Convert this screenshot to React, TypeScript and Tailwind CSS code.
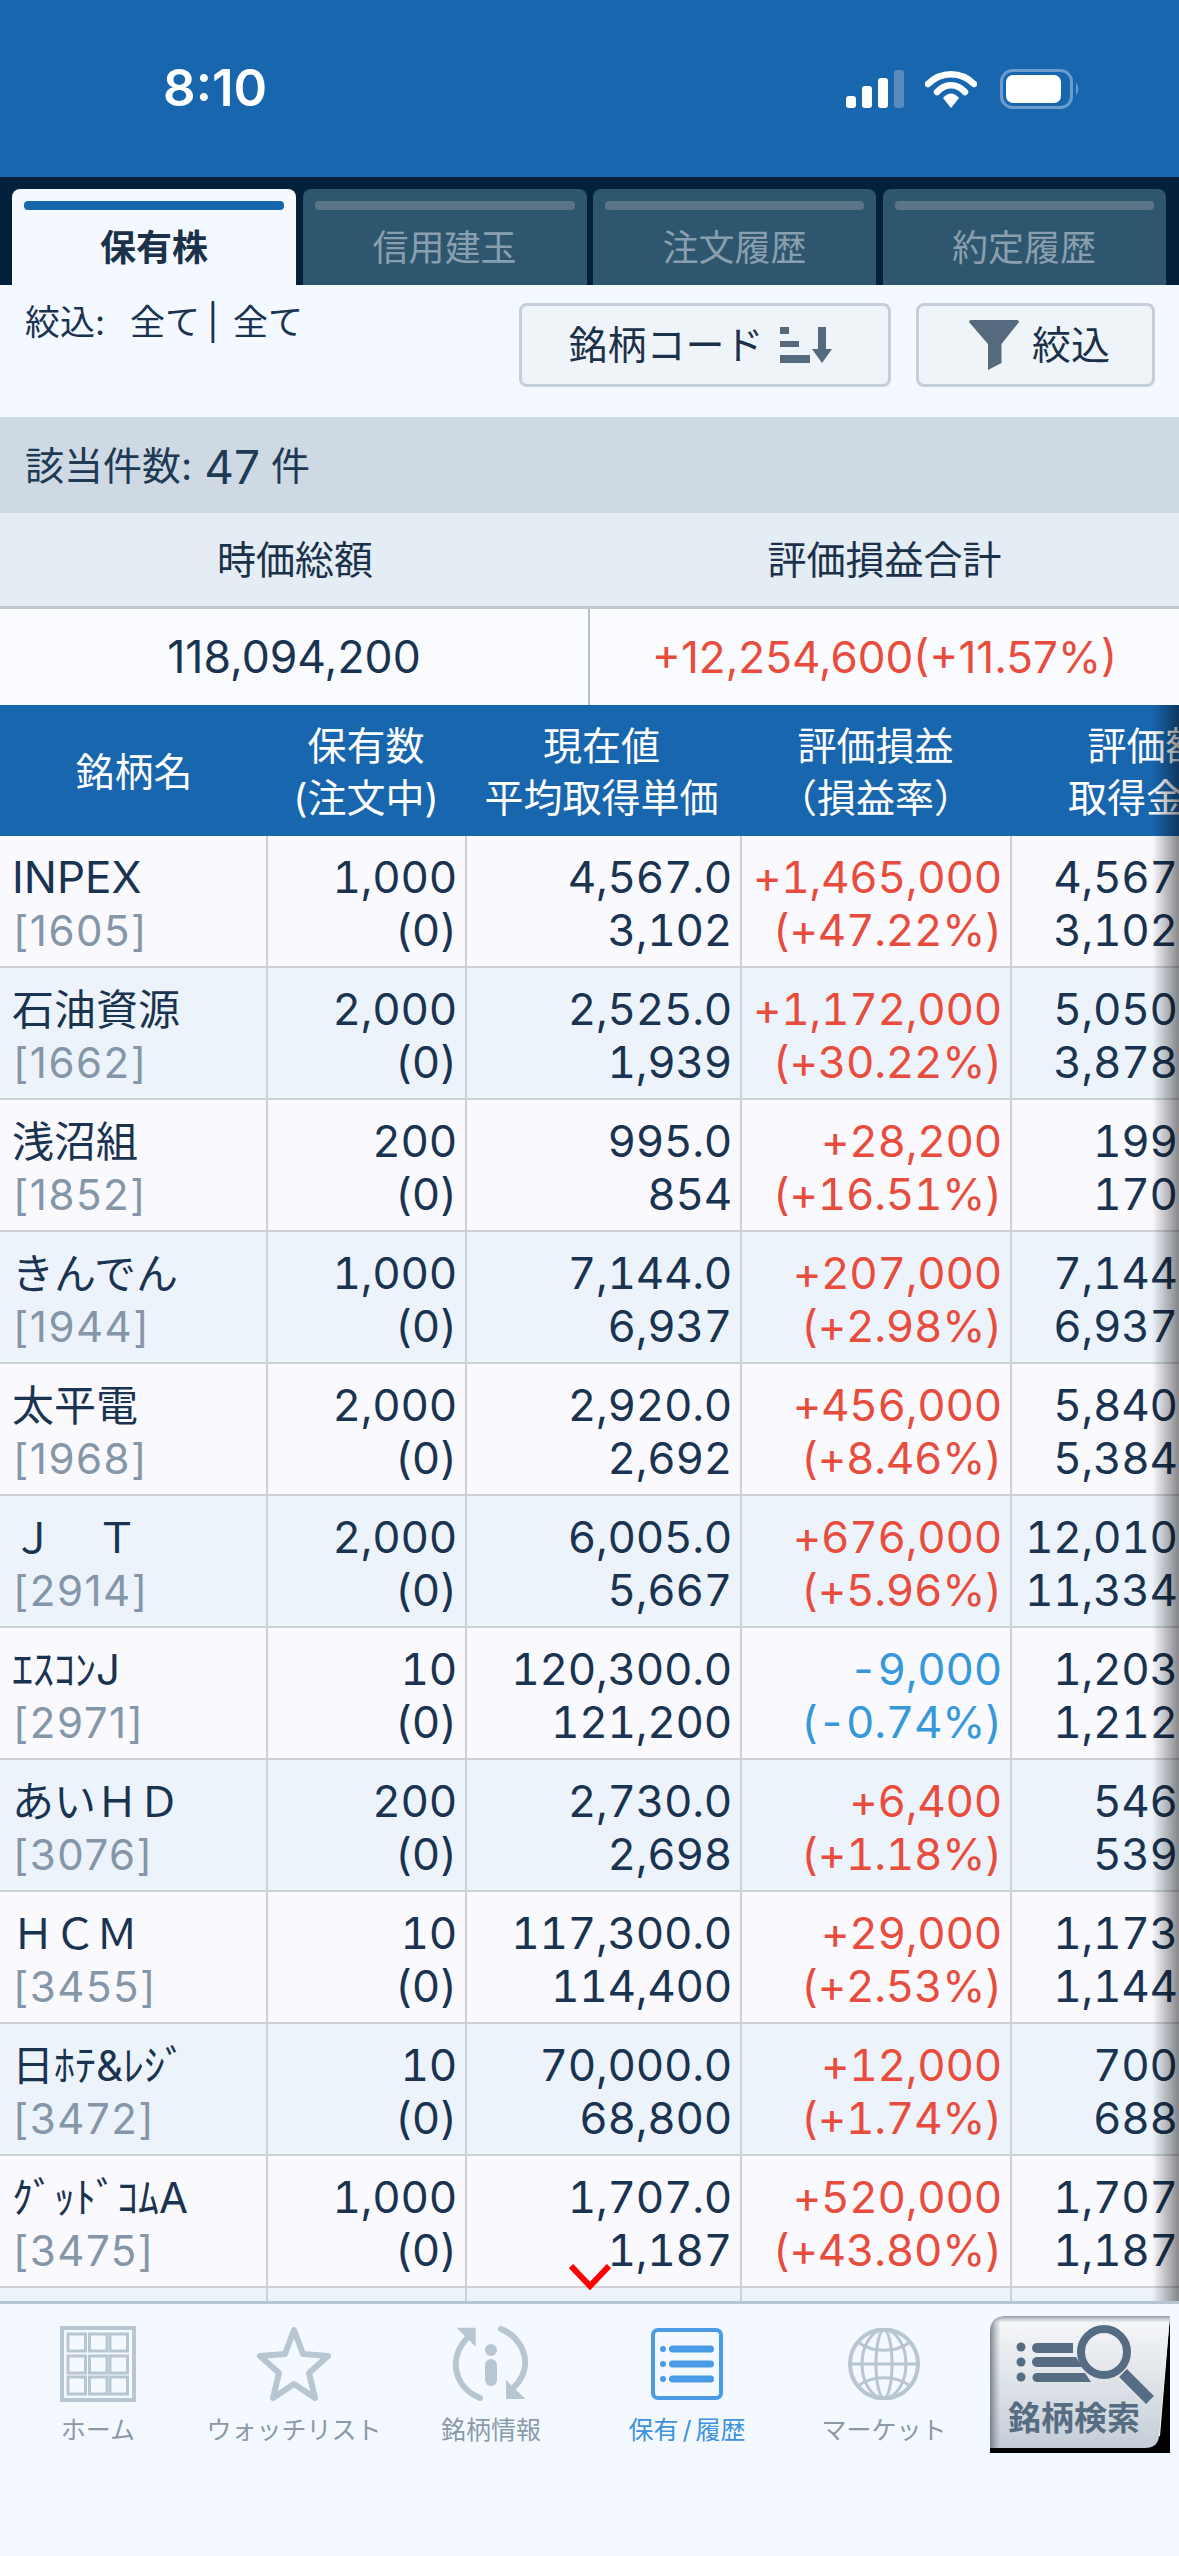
import React from "react";

type Row = { n: string; c: string; q: string; p: string; a: string; g: string; r: string; v: string; t: string; neg?: boolean };

const rows: Row[] = [
  { n: "INPEX", c: "1605", q: "1,000", p: "4,567.0", a: "3,102", g: "+1,465,000", r: "(+47.22%)", v: "4,567,000", t: "3,102,000" },
  { n: "石油資源", c: "1662", q: "2,000", p: "2,525.0", a: "1,939", g: "+1,172,000", r: "(+30.22%)", v: "5,050,000", t: "3,878,000" },
  { n: "浅沼組", c: "1852", q: "200", p: "995.0", a: "854", g: "+28,200", r: "(+16.51%)", v: "199,000", t: "170,800" },
  { n: "きんでん", c: "1944", q: "1,000", p: "7,144.0", a: "6,937", g: "+207,000", r: "(+2.98%)", v: "7,144,000", t: "6,937,000" },
  { n: "太平電", c: "1968", q: "2,000", p: "2,920.0", a: "2,692", g: "+456,000", r: "(+8.46%)", v: "5,840,000", t: "5,384,000" },
  { n: "Ｊ　Ｔ", c: "2914", q: "2,000", p: "6,005.0", a: "5,667", g: "+676,000", r: "(+5.96%)", v: "12,010,000", t: "11,334,000" },
  { n: "ｴｽｺﾝJ", c: "2971", q: "10", p: "120,300.0", a: "121,200", g: "-9,000", r: "(-0.74%)", v: "1,203,000", t: "1,212,000", neg: true },
  { n: "あいＨＤ", c: "3076", q: "200", p: "2,730.0", a: "2,698", g: "+6,400", r: "(+1.18%)", v: "546,000", t: "539,600" },
  { n: "ＨＣＭ", c: "3455", q: "10", p: "117,300.0", a: "114,400", g: "+29,000", r: "(+2.53%)", v: "1,173,000", t: "1,144,000" },
  { n: "日ﾎﾃ&ﾚｼﾞ", c: "3472", q: "10", p: "70,000.0", a: "68,800", g: "+12,000", r: "(+1.74%)", v: "700,000", t: "688,000" },
  { n: "ｸﾞｯﾄﾞｺﾑA", c: "3475", q: "1,000", p: "1,707.0", a: "1,187", g: "+520,000", r: "(+43.80%)", v: "1,707,000", t: "1,187,000" },
];

const cols = "grid grid-cols-[268px_199px_275px_270px_272px] w-[1284px]";

function StatusIcons() {
  return (
    <div className="flex items-center mr-[99px]">
      <svg width="58" height="38" viewBox="0 0 58 38">
        <rect x="0" y="26" width="10" height="12" rx="3" fill="#fff" />
        <rect x="16" y="16" width="10" height="22" rx="3" fill="#fff" />
        <rect x="32" y="8" width="10" height="30" rx="3" fill="#fff" />
        <rect x="48" y="0" width="10" height="38" rx="3" fill="#5a8cc0" />
      </svg>
      <svg width="52" height="38" viewBox="0 0 52 38" fill="none" className="ml-[21px]">
        <path d="M3 14 C16 1 36 1 49 14" stroke="#fff" strokeWidth="6.5" strokeLinecap="round" />
        <path d="M12 22 C20 13 32 13 40 22" stroke="#fff" strokeWidth="6.5" strokeLinecap="round" />
        <path d="M18 28 C23 22 29 22 34 28 L26 38 Z" fill="#fff" />
      </svg>
      <svg width="80" height="40" viewBox="0 0 80 40" fill="none" className="ml-[23px]">
        <rect x="1.5" y="1.5" width="70" height="37" rx="11" stroke="#6b9ccc" strokeWidth="3" />
        <rect x="6" y="6" width="55" height="28" rx="7" fill="#fff" />
        <path d="M76 14 C79 16 79 24 76 26 Z" fill="#6b9ccc" />
      </svg>
    </div>
  );
}

function Tab({ label, active, w }: { label: string; active?: boolean; w: string }) {
  return (
    <div className={`${w} ${active ? "bg-[#f3f9ff]" : "bg-[#2f566f]"} h-full rounded-t-[8px] flex flex-col items-center px-[12px] pt-[12px]`}>
      <div className={`w-full h-[9px] rounded-[4px] ${active ? "bg-[#1866ae]" : "bg-[#5b7587]"}`} />
      <div className={`mt-[16px] text-[36px] leading-[45px] ${active ? "font-bold text-[#1b3149]" : "text-[#8a9fae]"}`}>{label}</div>
    </div>
  );
}

function SortIcon() {
  return (
    <svg width="56" height="36" viewBox="0 0 56 36" className="ml-[13px] mr-[9px]">
      <rect x="3" y="0" width="9" height="7" fill="#566a7e" />
      <rect x="3" y="14" width="19" height="6" fill="#566a7e" />
      <rect x="3" y="28" width="30" height="8" fill="#566a7e" />
      <rect x="41" y="0" width="8" height="24" fill="#566a7e" />
      <path d="M35 22 H55 L45 36 Z" fill="#566a7e" />
    </svg>
  );
}

function FilterIcon() {
  return (
    <svg width="50" height="50" viewBox="0 0 50 50" className="mr-[13px]">
      <path d="M0 2 Q0 0 2 0 H48 Q50 0 50 2 L32.5 24 V43 L19 50 V24 Z" fill="#566a7e" />
    </svg>
  );
}

function HomeIcon() {
  const xs = [8, 29.5, 50];
  const ys = [8, 30, 51];
  return (
    <svg width="76" height="76" viewBox="0 0 76 76" fill="none" stroke="#b8c6d1">
      <rect x="2" y="2" width="72" height="72" strokeWidth="4" />
      {ys.map((y) => xs.map((x) => <rect key={`${x}-${y}`} x={x} y={y} width="17.5" height="17" strokeWidth="3" />))}
    </svg>
  );
}

function StarIcon() {
  return (
    <svg width="76" height="76" viewBox="0 0 76 76" fill="none">
      <path d="M38 4 L47 28 L72 30 L53 47 L59 72 L38 58 L17 72 L23 47 L4 30 L29 28 Z" stroke="#b8c6d1" strokeWidth="6" strokeLinejoin="round" />
    </svg>
  );
}

function InfoIcon() {
  return (
    <svg width="78" height="76" viewBox="0 0 78 76" fill="none">
      <path d="M49 3 C72 12 84 42 60 63" stroke="#b8c6d1" strokeWidth="6" strokeLinecap="round" />
      <path d="M28 72 C4 62 -6 34 16 11" stroke="#b8c6d1" strokeWidth="6" strokeLinecap="round" />
      <path d="M54 54 L73.5 73 H54 Z" fill="#b8c6d1" />
      <path d="M4.6 1.7 H23.7 V20.7 Z" fill="#b8c6d1" />
      <circle cx="39" cy="24" r="6" fill="#b8c6d1" />
      <rect x="33" y="33" width="12" height="27" rx="6" fill="#b8c6d1" />
    </svg>
  );
}

function ListIcon() {
  return (
    <svg width="72" height="72" viewBox="0 0 72 72" fill="none">
      <rect x="2" y="2" width="68" height="68" rx="5" stroke="#4a9be6" strokeWidth="4" />
      {[21, 36, 51].map((y) => (
        <g key={y} fill="#4a9be6">
          <circle cx="12" cy={y} r="3" />
          <rect x="18" y={y - 3.5} width="45" height="7" rx="3.5" />
        </g>
      ))}
    </svg>
  );
}

function GlobeIcon() {
  return (
    <svg width="72" height="72" viewBox="0 0 72 72" fill="none" stroke="#b8c6d1" strokeWidth="3">
      <ellipse cx="36" cy="36" rx="34" ry="34.5" strokeWidth="4" />
      <ellipse cx="36" cy="36" rx="22" ry="34" />
      <ellipse cx="36" cy="36" rx="8" ry="34" />
      <path d="M2 36 H70" />
      <path d="M10 14 C24 25 48 25 62 14" />
      <path d="M10 58 C24 47 48 47 62 58" />
    </svg>
  );
}

function SearchButton() {
  return (
    <div className="relative w-[180px] h-[137px] mt-[12px] ml-[6px]">
      <svg width="180" height="137" viewBox="0 0 180 137" className="absolute inset-0">
        <defs>
          <linearGradient id="sb" x1="0" y1="0" x2="0" y2="1">
            <stop offset="0" stopColor="#f6f7f8" />
            <stop offset="0.35" stopColor="#e6eaee" />
            <stop offset="1" stopColor="#c4cdd6" />
          </linearGradient>
          <linearGradient id="se" x1="0" y1="0" x2="1" y2="0">
            <stop offset="0" stopColor="#66727e" stopOpacity="0.85" />
            <stop offset="0.06" stopColor="#8a96a2" stopOpacity="0" />
          </linearGradient>
          <linearGradient id="st" x1="0" y1="0" x2="0" y2="1">
            <stop offset="0" stopColor="#66727e" stopOpacity="0.7" />
            <stop offset="0.05" stopColor="#8a96a2" stopOpacity="0" />
          </linearGradient>
        </defs>
        <path d="M180 0 H180 V137 H0 V128 H150 L170 120 Z" fill="#000" />
        <path d="M0 16 Q0 0 16 0 H180 L169 120 Q168 132 155 132 H0 Z" fill="url(#sb)" />
        <path d="M0 16 Q0 0 16 0 H180 L169 120 Q168 132 155 132 H0 Z" fill="url(#se)" />
        <path d="M0 16 Q0 0 16 0 H180 L169 120 Q168 132 155 132 H0 Z" fill="url(#st)" />
        {[31, 46, 61].map((y) => (
          <circle key={y} cx="31" cy={y} r="4.5" fill="#566c82" />
        ))}
        <path d="M47 27 H83 V37 H47 A5 5 0 0 1 47 27 Z" fill="#566c82" />
        <path d="M47 41 H86 L92 51 H47 A5 5 0 0 1 47 41 Z" fill="#566c82" />
        <path d="M47 57 H95 L101 66 H47 A4.5 4.5 0 0 1 47 57 Z" fill="#566c82" />
        <circle cx="114" cy="36" r="23" fill="none" stroke="#566c82" strokeWidth="8" />
        <path d="M133 57 L160 84" stroke="#566c82" strokeWidth="11" />
      </svg>
      <div className="absolute left-[18px] top-[82px] text-[33px] leading-[40px] font-bold text-[#566c82] whitespace-nowrap">銘柄検索</div>
    </div>
  );
}

function NavItem({ icon, label, active, w, tight }: { icon: React.ReactNode; label: string; active?: boolean; w: string; tight?: boolean }) {
  return (
    <div className={`${w} pt-[22px] flex flex-col items-center`}>
      <div className="h-[76px] flex items-center justify-center">{icon}</div>
      <div className={`mt-[13px] text-[25px] leading-[30px] whitespace-nowrap ${tight ? "[word-spacing:-3px]" : ""} ${active ? "text-[#3d92de]" : "text-[#8a9aa8]"}`}>{label}</div>
    </div>
  );
}

function TableRow({ row, alt }: { row: Row; alt: boolean }) {
  const bg = alt ? "bg-[#edf3fa]" : "bg-[#f9f9fe]";
  const gain = row.neg ? "text-[#3498db]" : "text-[#e74c3c]";
  const cell = "border-r-[2px] border-[#cdd1d6] h-full pl-[2px] pr-[8px] pt-[15px] text-right whitespace-nowrap overflow-hidden tabular-nums tracking-[-0.3px]";
  return (
    <div className={`${cols} ${bg} h-[132px] border-b-[2px] border-[#cdd1d6] text-[44px] leading-[53px] text-[#1a3350]`}>
      <div className="border-r-[2px] border-[#cdd1d6] h-full pl-[12px] pt-[15px] whitespace-nowrap overflow-hidden">
        <div className={row.n === "INPEX" ? "text-[44px]" : "text-[42px]"}>{row.n}</div>
        <div className="text-[#8496a8] text-[42px] tracking-[1.5px] pl-[1px]">[{row.c}]</div>
      </div>
      <div className={cell}>
        <div>{row.q}</div>
        <div>(0)</div>
      </div>
      <div className={cell}>
        <div>{row.p}</div>
        <div>{row.a}</div>
      </div>
      <div className={`${cell} ${gain}`}>
        <div>{row.g}</div>
        <div>{row.r}</div>
      </div>
      <div className={cell}>
        <div>{row.v}</div>
        <div>{row.t}</div>
      </div>
    </div>
  );
}

export default function App() {
  return (
    <div className="w-[1179px] h-[2556px] flex flex-col overflow-hidden bg-[#f3f9ff] font-['Inter','Noto_Sans_CJK_JP',sans-serif] text-[#1a3350]">
      <div className="h-[177px] shrink-0 bg-[#1866ae] flex items-start justify-between pl-[163px] pt-[59px]">
        <div className="text-[51px] leading-[58px] font-semibold text-white">8:10</div>
        <div className="mt-[10px]">
          <StatusIcons />
        </div>
      </div>

      <div className="h-[108px] shrink-0 bg-[#04203a] pt-[12px] pl-[12px] flex gap-[6.5px]">
        <Tab label="保有株" active w="w-[284px]" />
        <Tab label="信用建玉" w="w-[284px]" />
        <Tab label="注文履歴" w="w-[283px]" />
        <Tab label="約定履歴" w="w-[283px]" />
      </div>

      <div className="h-[132px] shrink-0 flex items-start pl-[25px] pt-[16px]">
        <div className="w-[494px] flex text-[35px] leading-[42px] whitespace-nowrap">
          <span className="w-[105px]">絞込:</span>
          <span className="w-[77px]">全て</span>
          <span className="w-[26px]">|</span>
          <span>全て</span>
        </div>
        <div className="w-[372px] h-[84px] mt-[2px] rounded-[8px] border-[3px] border-[#c5cfda] bg-[#eff4f9] flex items-center justify-center text-[39px] text-[#1b3149]">
          銘柄コード
          <SortIcon />
        </div>
        <div className="ml-[25px] w-[239px] h-[84px] mt-[2px] rounded-[8px] border-[3px] border-[#c5cfda] bg-[#eff4f9] flex items-center justify-center pl-[8px] text-[39px] text-[#1b3149]">
          <FilterIcon />
          絞込
        </div>
      </div>

      <div className="h-[96px] shrink-0 bg-[#ced9e4] flex items-center pl-[25px] pt-[3px] text-[39px] text-[#1f3a54] whitespace-nowrap">
        <span>該当件数:</span>
        <span className="text-[46px] ml-[12px] mr-[11px] leading-none">47</span>
        <span>件</span>
      </div>

      <div className="h-[96px] shrink-0 bg-[#e4ecf4] border-b-[3px] border-[#c0c8d0] flex text-[39px] text-[#1b3149] pt-[2px]">
        <div className="w-[590px] flex items-center justify-center">時価総額</div>
        <div className="flex-1 flex items-center justify-center">評価損益合計</div>
      </div>
      <div className="h-[96px] shrink-0 bg-[#f9fbff] flex">
        <div className="w-[590px] border-r-[2px] border-[#b8c0c8] flex items-center justify-center text-[44.5px]">118,094,200</div>
        <div className="flex-1 flex items-center justify-center text-[#e74c3c] text-[44px]">+12,254,600(+11.57%)</div>
      </div>

      <div className="relative flex-1 min-h-0 overflow-hidden">
        <div className={`${cols} h-[131px] pt-[2px] bg-[#1866ae] text-white text-[39px] leading-[52px] text-center items-center`}>
          <div>銘柄名</div>
          <div className="pr-[3px]">
            <div>保有数</div>
            <div>(注文中)</div>
          </div>
          <div className="pr-[6px]">
            <div>現在値</div>
            <div>平均取得単価</div>
          </div>
          <div className="pr-[3px]">
            <div>評価損益</div>
            <div>（損益率）</div>
          </div>
          <div className="pr-[4px]">
            <div>評価額</div>
            <div>取得金額</div>
          </div>
        </div>
        {rows.map((r, i) => (
          <TableRow key={r.c} row={r} alt={i % 2 === 1} />
        ))}
        <div className={`${cols} bg-[#edf3fa] h-[60px]`}>
          <div className="border-r-[2px] border-[#cdd1d6]" />
          <div className="border-r-[2px] border-[#cdd1d6]" />
          <div className="border-r-[2px] border-[#cdd1d6]" />
          <div className="border-r-[2px] border-[#cdd1d6]" />
          <div />
        </div>
        <div className="absolute right-0 top-0 bottom-0 w-[27px] bg-gradient-to-r from-transparent to-[#00000073]" />
        <svg width="42" height="26" viewBox="0 0 42 26" fill="none" className="absolute left-[569px] bottom-[11px]">
          <path d="M2 2 L21 22 L40 2" stroke="#ff0000" strokeWidth="6" />
        </svg>
      </div>

      <div className="h-[255px] shrink-0 border-t-[3px] border-[#b5c6d3] bg-[#f3f9ff] flex items-start">
        <NavItem icon={<HomeIcon />} label="ホーム" w="w-[196px]" />
        <NavItem icon={<StarIcon />} label="ウォッチリスト" w="w-[196px]" />
        <NavItem icon={<InfoIcon />} label="銘柄情報" w="w-[198px]" />
        <NavItem icon={<ListIcon />} label="保有 / 履歴" active tight w="w-[194px]" />
        <NavItem icon={<GlobeIcon />} label="マーケット" w="w-[200px]" />
        <SearchButton />
      </div>
    </div>
  );
}
